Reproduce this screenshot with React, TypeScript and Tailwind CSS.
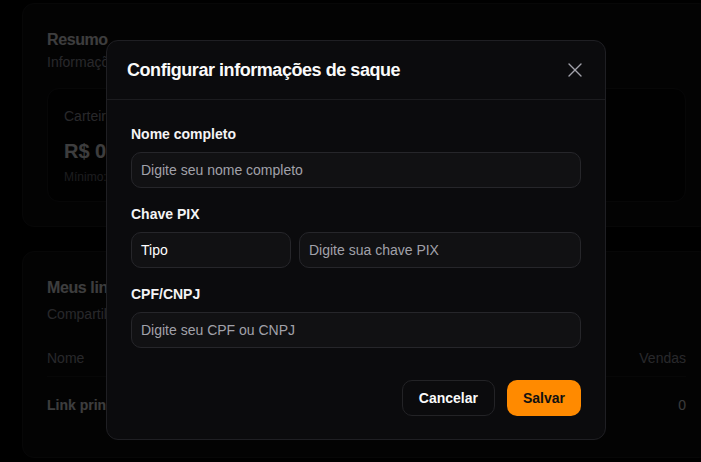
import { X } from "lucide-react"

function SummaryCard() {
  return (
    <div className="w-[689px] rounded-xl border border-[#1c1c1e] bg-[#0e0e0f] p-6">
      <h2 className="text-base font-bold leading-6 tracking-tight text-zinc-100">Resumo</h2>
      <p className="text-sm leading-5 text-zinc-400">Informações da sua carteira</p>

      <div className="mt-4 grid grid-cols-2 gap-4">
        <div className="rounded-xl border border-[#1c1c1e] bg-[#060606] px-4 pt-[17px] pb-4">
          <p className="text-sm leading-5 text-zinc-400">Carteira</p>
          <p className="mt-[11px] text-xl font-bold leading-7 text-zinc-100">R$ 0,00</p>
          <p className="mt-1 text-xs leading-4 text-zinc-500">Mínimo: R$ 50,00</p>
        </div>
        <div className="rounded-xl border border-[#1c1c1e] bg-[#060606] px-4 pt-[17px] pb-4">
          <p className="text-sm leading-5 text-zinc-400">Total sacado</p>
          <p className="mt-[11px] text-xl font-bold leading-7 text-zinc-100">R$ 0,00</p>
          <p className="mt-1 text-xs leading-4 text-zinc-500">Desde o início</p>
        </div>
      </div>
    </div>
  )
}

function LinksCard() {
  return (
    <div className="w-[689px] rounded-xl border border-[#1c1c1e] bg-[#0e0e0f] p-6">
      <h2 className="text-base font-bold leading-6 tracking-tight text-zinc-100">Meus links</h2>
      <p className="mt-1 text-sm leading-5 text-zinc-400">Compartilhe seus links</p>

      <table className="mt-4 w-full text-sm">
        <thead>
          <tr className="border-b border-[#1c1c1e] text-zinc-400">
            <th className="py-2 text-left font-normal">Nome</th>
            <th className="py-2 text-left font-normal">Link</th>
            <th className="py-2 text-right font-normal">Cliques</th>
            <th className="py-2 text-right font-normal">Vendas</th>
          </tr>
        </thead>
        <tbody>
          <tr>
            <td className="py-[18px] font-bold text-zinc-100">Link principal</td>
            <td className="py-[18px] text-zinc-400">loja.com/r/afiliado</td>
            <td className="py-[18px] text-right text-zinc-200">0</td>
            <td className="py-[18px] text-right text-zinc-200">0</td>
          </tr>
        </tbody>
      </table>
    </div>
  )
}

function Field({ label, children }: { label: string; children: React.ReactNode }) {
  return (
    <div className="flex flex-col gap-2">
      <label className="text-sm font-semibold leading-5 text-[#f4f4f5]">{label}</label>
      {children}
    </div>
  )
}

const inputClass =
  "h-9 w-full rounded-[10px] border border-[#26262a] bg-[#111113] pl-[9px] pr-3 text-sm text-white outline-none placeholder:text-[#a1a1aa]"

function WithdrawModal() {
  return (
    <div className="fixed inset-0 bg-black/75">
      <div className="absolute left-[106px] top-[40px] w-[500px] rounded-xl border border-[#1f1f23] bg-[#0b0b0d]">
        <div className="flex items-center justify-between border-b border-[#1c1c1f] pl-5 pr-6 py-[15px]">
          <h3 className="text-lg font-bold leading-7 tracking-tight text-[#fafafa]">
            Configurar informações de saque
          </h3>
          <button className="-mr-1.5 flex h-6 w-6 items-center justify-center text-[#a1a1aa]">
            <X size={24} strokeWidth={1.4} className="shrink-0" />
          </button>
        </div>

        <div className="flex flex-col gap-4 px-6 pt-6 pb-[23px]">
          <Field label="Nome completo">
            <input className={inputClass} placeholder="Digite seu nome completo" />
          </Field>

          <Field label="Chave PIX">
            <div className="flex gap-2">
              <button className="h-9 w-[160px] shrink-0 rounded-[10px] border border-[#26262a] bg-[#111113] pl-[9px] text-left text-sm text-white">
                Tipo
              </button>
              <input className={inputClass} placeholder="Digite sua chave PIX" />
            </div>
          </Field>

          <Field label="CPF/CNPJ">
            <input className={inputClass} placeholder="Digite seu CPF ou CNPJ" />
          </Field>

          <div className="mt-4 flex justify-end gap-3">
            <button className="h-9 rounded-[10px] border border-[#232326] bg-[#0b0b0d] px-4 text-sm font-bold text-[#fafafa]">
              Cancelar
            </button>
            <button className="h-9 rounded-[10px] bg-[#ff8a00] px-4 text-sm font-bold text-[#111111]">
              Salvar
            </button>
          </div>
        </div>
      </div>
    </div>
  )
}

export default function App() {
  return (
    <div className="relative h-screen w-full overflow-hidden bg-black font-['Liberation_Sans',Arial,sans-serif]">
      <div className="flex flex-col gap-6 pl-[22px] pt-[3px]">
        <SummaryCard />
        <LinksCard />
      </div>
      <WithdrawModal />
    </div>
  )
}
